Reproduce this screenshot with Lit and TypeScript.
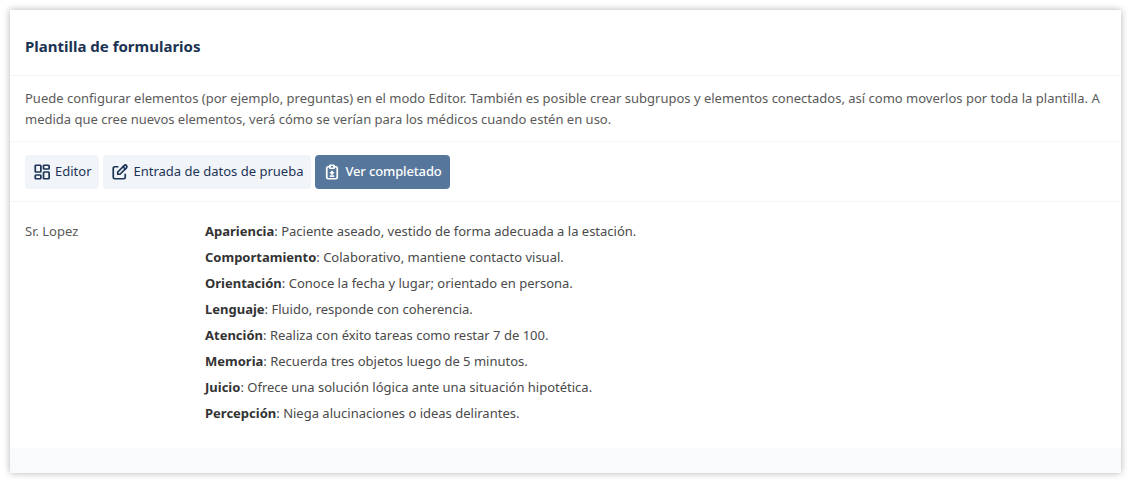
import { LitElement, html, css } from "lit";
import { customElement } from "lit/decorators.js";

const rows: [string, string][] = [
  ["Apariencia", "Paciente aseado, vestido de forma adecuada a la estación."],
  ["Comportamiento", "Colaborativo, mantiene contacto visual."],
  ["Orientación", "Conoce la fecha y lugar; orientado en persona."],
  ["Lenguaje", "Fluido, responde con coherencia."],
  ["Atención", "Realiza con éxito tareas como restar 7 de 100."],
  ["Memoria", "Recuerda tres objetos luego de 5 minutos."],
  ["Juicio", "Ofrece una solución lógica ante una situación hipotética."],
  ["Percepción", "Niega alucinaciones o ideas delirantes."],
];

@customElement("app-root")
export class AppRoot extends LitElement {
  static styles = css`
    :host { display: block; height: 483px; padding: 10px; box-sizing: border-box; background: #fff; font-family: "Noto Sans", sans-serif; color: #3f4254; overflow: hidden; }
    .card { height: 463px; background: #fff; box-shadow: 0 0 7px rgba(0,0,0,.3); display: flex; flex-direction: column; }
    .head { height: 66px; box-sizing: border-box; border-bottom: 1px solid #f3f4f6; display: flex; align-items: center; padding: 6px 15px 0; font-size: 15px; font-weight: 700; color: #1b3252; }
    .desc { height: 66px; box-sizing: border-box; border-bottom: 1px solid #f6f7f9; padding: 12px 15px; font-size: 13px; line-height: 21px; color: #5a5a5a; }
    .bar { height: 60px; box-sizing: border-box; border-bottom: 1px solid #f3f4f6; display: flex; align-items: center; gap: 4px; padding: 0 15px; }
    .btn { height: 34px; box-sizing: border-box; display: flex; align-items: center; gap: 4px; padding: 0 8px 2px; border-radius: 4px; background: #f1f4f8; color: #1d3557; font-size: 13px; }
    .btn.first { padding-right: 7px; }
    .btn.mid { gap: 5px; }
    .btn.on { background: #56779b; color: #fff; font-weight: 500; letter-spacing: -0.14px; }
    .btn svg { width: 18px; height: 18px; flex: none; margin-top: 2px; fill: none; stroke: currentColor; stroke-width: 2.3; stroke-linecap: round; stroke-linejoin: round; }
    .body { flex: 1; display: flex; padding: 16px 15px 0; font-size: 13px; color: #5a5a5a; }
    .name { width: 180px; line-height: 26px; }
    .row { height: 26px; line-height: 26px; color: #4a4a4a; }
    .row b { color: #333; font-weight: 700; }
    .foot { height: 25px; background: #f8fafc; }
  `;
  render() {
    return html`<div class="card">
      <div class="head">Plantilla de formularios</div>
      <div class="desc">Puede configurar elementos (por ejemplo, preguntas) en el modo Editor. También es posible crear subgrupos y elementos conectados, así como moverlos por toda la plantilla. A medida que cree nuevos elementos, verá cómo se verían para los médicos cuando estén en uso.</div>
      <div class="bar">
        <div class="btn first"><svg viewBox="0 0 24 24"><rect x="3" y="3" width="7.500" height="9" rx="1"/><rect x="14" y="3" width="7.500" height="5" rx="1"/><rect x="3" y="16" width="7.500" height="5" rx="1"/><rect x="14" y="12" width="7.500" height="9" rx="1"/></svg>Editor</div>
        <div class="btn mid"><svg viewBox="0 0 24 24"><path d="M9 5H5a2 2 0 0 0-2 2v12a2 2 0 0 0 2 2h12a2 2 0 0 0 2-2v-4"/><path d="M20.600 6.400a2.100 2.100 0 0 0-3-3L9 12v3h3z"/><path d="M16 5l3 3"/></svg>Entrada de datos de prueba</div>
        <div class="btn on"><svg viewBox="0 0 24 24"><path d="M9 5H7a2 2 0 0 0-2 2v12a2 2 0 0 0 2 2h10a2 2 0 0 0 2-2V7a2 2 0 0 0-2-2h-2"/><rect x="9" y="3" width="6" height="4" rx="1"/><path d="M10 13h4M12 11v4M10 17.500h4"/></svg>Ver completado</div>
      </div>
      <div class="body">
        <div class="name">Sr. Lopez</div>
        <div>${rows.map(([k, v]) => html`<div class="row"><b>${k}</b>: ${v}</div>`)}</div>
      </div>
      <div class="foot"></div>
    </div>`;
  }
}
